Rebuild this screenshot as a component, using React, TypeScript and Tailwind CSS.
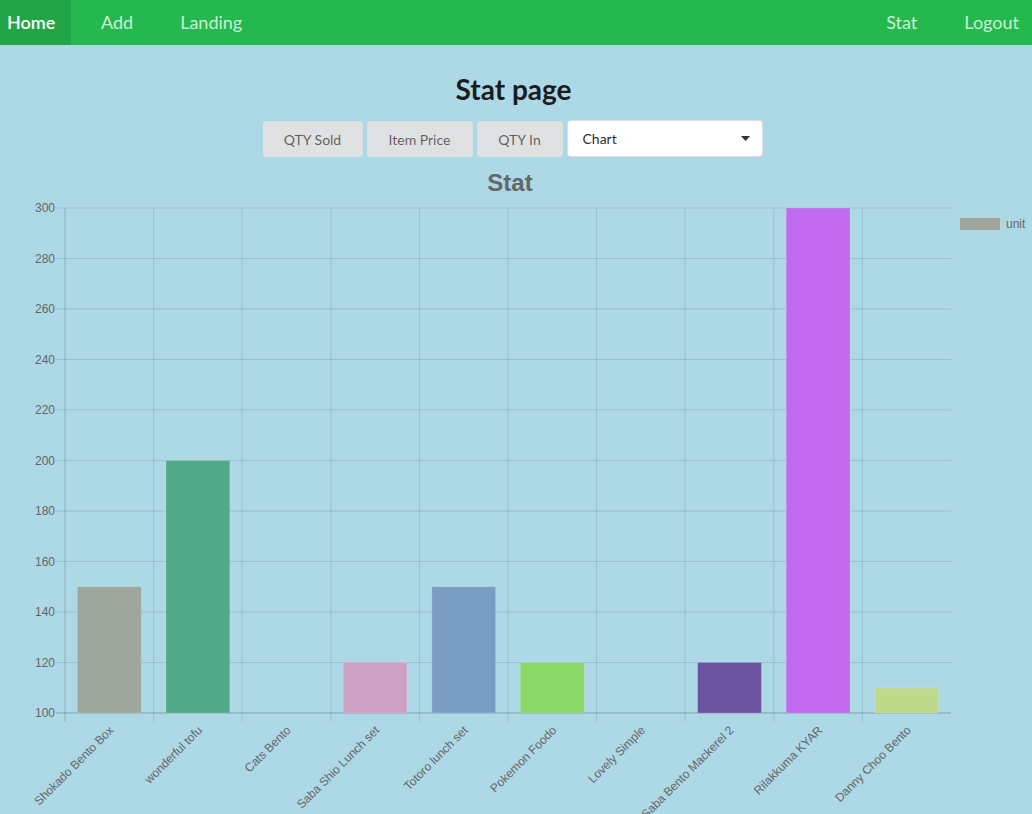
const items = [
  { name: "Shokado Bento Box", v: 150, c: "#9ea69b" },
  { name: "wonderful tofu", v: 200, c: "#53aa89" },
  { name: "Cats Bento", v: 100, c: "#c0c0c0" },
  { name: "Saba Shio Lunch set", v: 120, c: "#cfa1c2" },
  { name: "Totoro lunch set", v: 150, c: "#7a9ec3" },
  { name: "Pokemon Foodo", v: 120, c: "#89d868" },
  { name: "Lovely Simple", v: 100, c: "#c0c0c0" },
  { name: "Saba Bento Mackerel 2", v: 120, c: "#6d549e" },
  { name: "Rilakkuma KYAR", v: 300, c: "#c169ef" },
  { name: "Danny Choo Bento", v: 110, c: "#bfd98b" },
];

const LEFT = 65;
const RIGHT = 951;
const TOP = 208;
const BOTTOM = 713;
const colW = (RIGHT - LEFT) / items.length;
const yOf = (v: number) => BOTTOM - ((v - 100) / 200) * (BOTTOM - TOP);

function StatChart() {
  const ticks = [100, 120, 140, 160, 180, 200, 220, 240, 260, 280, 300];
  return (
    <svg width="1032" height="649" viewBox="0 165 1032 649" className="block">
      <g fontFamily="'Liberation Sans', Arial, sans-serif">
        <text x="510" y="191" textAnchor="middle" fontSize="24" fontWeight="bold" fill="#666">
          Stat
        </text>

        {/* horizontal grid */}
        {ticks.map((t) => (
          <g key={t}>
            <line
              x1={56}
              x2={RIGHT}
              y1={yOf(t)}
              y2={yOf(t)}
              stroke={t === 100 ? "rgba(0,0,0,0.25)" : "rgba(0,0,0,0.1)"}
              strokeWidth="1"
            />
            <text x="55" y={yOf(t) + 4} textAnchor="end" fontSize="12" fill="#666">
              {t}
            </text>
          </g>
        ))}

        {/* vertical grid */}
        {Array.from({ length: items.length }, (_, i) => (
          <line
            key={i}
            x1={LEFT + i * colW}
            x2={LEFT + i * colW}
            y1={TOP}
            y2={722}
            stroke={i === 0 ? "rgba(0,0,0,0.18)" : "rgba(0,0,0,0.1)"}
            strokeWidth="1"
          />
        ))}

        {/* bars */}
        {items.map((it, i) => {
          const w = colW * 0.72;
          const x = LEFT + i * colW + (colW - w) / 2;
          const y = yOf(it.v);
          if (it.v <= 100) return null;
          return (
            <rect
              key={it.name}
              x={x}
              y={y}
              width={w}
              height={BOTTOM - y}
              fill={it.c}
              stroke="rgba(255,255,255,0.15)"
              strokeWidth="1"
            />
          );
        })}

        {/* x labels */}
        {items.map((it, i) => {
          const cx = LEFT + i * colW + colW / 2 + 5;
          const cy = 731;
          return (
            <text
              key={it.name}
              x={cx}
              y={cy}
              textAnchor="end"
              fontSize="12"
              fill="#666"
              transform={`rotate(-45 ${cx} ${cy})`}
            >
              {it.name}
            </text>
          );
        })}

        {/* legend */}
        <rect x="959.5" y="217.5" width="41" height="13" fill="#9ea69b" stroke="rgba(255,255,255,0.3)" />
        <text x="1006" y="228" fontSize="12" fill="#666">
          unit
        </text>
      </g>
    </svg>
  );
}

export default function App() {
  return (
    <div className="w-[1032px] h-[814px] overflow-hidden bg-[#add8e6] font-['Lato','Open_Sans',sans-serif]">
      <nav className="h-[45px] bg-[#25b84f] flex items-stretch text-[18px]">
        <div className="w-[71px] pl-[7px] flex items-center bg-[#22a546] rounded-br-[3px] text-white font-semibold">
          Home
        </div>
        <div className="ml-[30px] flex items-center text-[#c9f0d3]">Add</div>
        <div className="ml-[47px] flex items-center text-[#c9f0d3]">Landing</div>
        <div className="ml-auto flex items-center text-[#c9f0d3]">Stat</div>
        <div className="ml-[47px] mr-[13px] flex items-center text-[#c9f0d3]">Logout</div>
      </nav>

      <div className="pt-[27px] flex flex-col items-center">
        <h1 className="text-[28px] leading-[34px] font-bold text-[#1b1c1d] pr-[5px]">Stat page</h1>
        <div className="mt-[15px] flex gap-[4px] text-[14px] text-[rgba(0,0,0,0.6)] pr-[7px]">
          <button className="w-[100px] h-[36px] rounded-[4px] bg-[#e0e1e2]">QTY Sold</button>
          <button className="w-[106px] h-[36px] rounded-[4px] bg-[#e0e1e2]">Item Price</button>
          <button className="w-[86px] h-[36px] rounded-[4px] bg-[#e0e1e2]">QTY In</button>
          <div className="w-[196px] h-[37px] -mt-[1px] rounded-[4px] bg-white border border-[rgba(34,36,38,0.15)] flex items-center justify-between pl-[15px] pr-[12px] text-[rgba(0,0,0,0.87)]">
            <span>Chart</span>
            <svg width="9" height="5" viewBox="0 0 9 5">
              <path d="M0 0 L9 0 L4.5 5 Z" fill="#333" />
            </svg>
          </div>
        </div>
      </div>

      <div className="mt-[8px]">
        <StatChart />
      </div>
    </div>
  );
}
